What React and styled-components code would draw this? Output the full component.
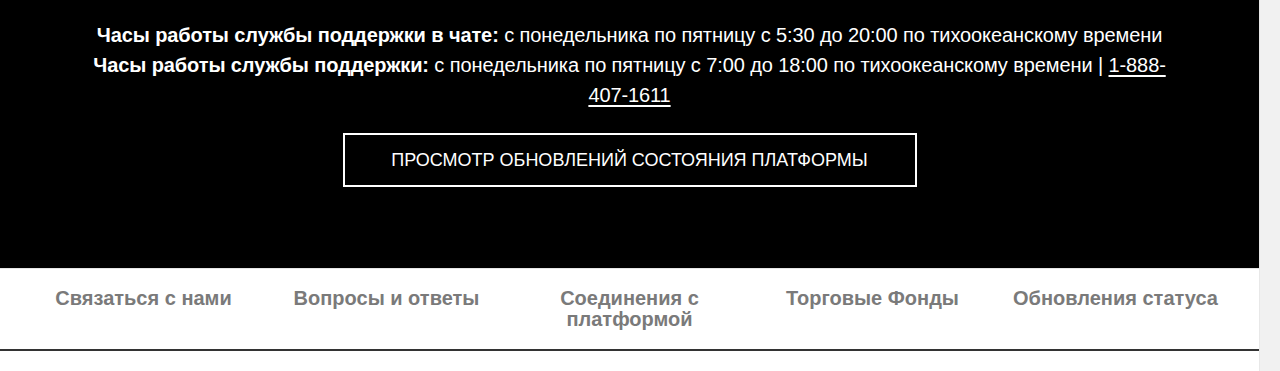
import styled, { createGlobalStyle } from 'styled-components';

const GlobalStyle = createGlobalStyle`
  html, body {
    margin: 0;
    padding: 0;
    background: #fff;
  }
  body {
    font-family: "Liberation Sans", Arial, sans-serif;
  }
`;

const navItems = [
  'Связаться с нами',
  'Вопросы и ответы',
  'Соединения с платформой',
  'Торговые Фонды',
  'Обновления статуса',
];

export default function App() {
  return (
    <>
      <GlobalStyle />
      <Page>
        <Main>
          <Hero>
            <Hours>
              <Line>
                <b>Часы работы службы поддержки в чате:</b> с понедельника по пятницу с 5:30 до 20:00 по тихоокеанскому времени
              </Line>
              <Line>
                <b>Часы работы службы поддержки:</b> с понедельника по пятницу с 7:00 до 18:00 по тихоокеанскому времени |{' '}
                <Phone href="#">1-888-407-1611</Phone>
              </Line>
            </Hours>
            <StatusButton>ПРОСМОТР ОБНОВЛЕНИЙ СОСТОЯНИЯ ПЛАТФОРМЫ</StatusButton>
          </Hero>
          <Nav>
            {navItems.map((item) => (
              <NavItem key={item}>{item}</NavItem>
            ))}
          </Nav>
        </Main>
        <Gutter />
      </Page>
    </>
  );
}

const Page = styled.div`
  display: flex;
  width: 1280px;
  height: 371px;
  overflow: hidden;
`;
const Main = styled.div`
  flex: 1;
  display: flex;
  flex-direction: column;
`;
const Hero = styled.section`
  background: #000;
  color: #fff;
  height: 268px;
  display: flex;
  flex-direction: column;
  align-items: center;
  padding-top: 20px;
  box-sizing: border-box;
`;
const Hours = styled.div`
  width: 1084px;
  text-align: center;
  font-size: 20px;
  line-height: 30px;
  letter-spacing: -0.1px;
  b {
    font-weight: 700;
  }
`;
const Line = styled.div``;
const Phone = styled.a`
  color: #fff;
  text-decoration: underline;
  text-underline-offset: 3px;
`;
const StatusButton = styled.button`
  margin-top: 23px;
  width: 574px;
  height: 54px;
  background: #000;
  color: #fff;
  border: 2px solid #fff;
  font-family: "Liberation Sans", Arial, sans-serif;
  font-size: 18px;
  cursor: pointer;
`;
const Nav = styled.nav`
  display: grid;
  grid-template-columns: repeat(5, 243px);
  justify-content: center;
  padding: 19px 0 19px;
  border-top: 1px solid #e6e6e6;
  border-bottom: 2px solid #333;
`;
const NavItem = styled.a`
  padding: 0 14px;
  text-align: center;
  color: #7a7a7a;
  font-weight: 700;
  font-size: 20px;
  line-height: 21px;
`;
const Gutter = styled.div`
  width: 21px;
  background: #f1f1f1;
  border-left: 1px solid #e8e8e8;
  box-sizing: border-box;
`;
